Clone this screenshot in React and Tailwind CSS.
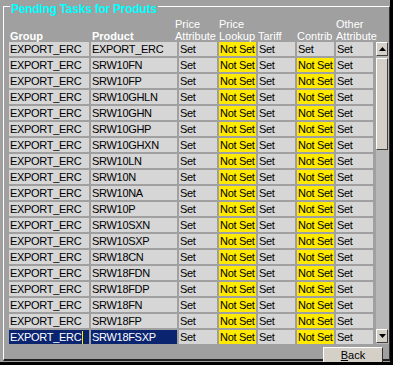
import React from "react";

const products = [
  "EXPORT_ERC",
  "SRW10FN",
  "SRW10FP",
  "SRW10GHLN",
  "SRW10GHN",
  "SRW10GHP",
  "SRW10GHXN",
  "SRW10LN",
  "SRW10N",
  "SRW10NA",
  "SRW10P",
  "SRW10SXN",
  "SRW10SXP",
  "SRW18CN",
  "SRW18FDN",
  "SRW18FDP",
  "SRW18FN",
  "SRW18FP",
  "SRW18FSXP",
];

const rows = products.map((p, i) => ({
  group: "EXPORT_ERC",
  product: p,
  priceAttr: "Set",
  priceLookup: "Not Set",
  tariff: "Set",
  contrib: i === 0 ? "Set" : "Not Set",
  other: "Set",
}));

const Cell = ({ value }) => (
  <div
    className={`h-[14px] pl-[1px] leading-[14px] tracking-[-0.3px] whitespace-nowrap overflow-hidden ${
      value === "Not Set" ? "bg-[#ffea00]" : "bg-[#d6d6d6]"
    } text-black`}
  >
    {value}
  </div>
);

const Arrow = ({ up }) => (
  <svg width="7" height="4" viewBox="0 0 7 4">
    {up ? <path d="M3.5 0 L7 4 L0 4 Z" fill="#000" /> : <path d="M0 0 L7 0 L3.5 4 Z" fill="#000" />}
  </svg>
);

const ScrollBar = () => (
  <div className="w-[13px] h-[302px] bg-[#b8b8b8] flex flex-col">
    <div className="h-[14px] w-[12px] bg-[#d4d0c8] border-t border-l border-white border-r border-b border-r-[#404040] border-b-[#404040] flex items-center justify-center">
      <Arrow up />
    </div>
    <div className="mt-[2px] h-[92px] w-[12px] bg-[#d4d0c8] border-t border-l border-white border-r border-b border-r-[#404040] border-b-[#404040]"></div>
    <div className="flex-1"></div>
    <div className="mb-[1px] h-[14px] w-[12px] bg-[#d4d0c8] border-t border-l border-white border-r border-b border-r-[#404040] border-b-[#404040] flex items-center justify-center">
      <Arrow />
    </div>
  </div>
);

const cols = "grid grid-cols-[80px_86px_38px_37px_37px_37px_37px] gap-x-[2px]";

export default function App() {
  return (
    <div
      className="relative w-[393px] h-[365px] bg-[#a0a0a0] border-r-[3px] border-b-[3px] border-black text-[11px] overflow-hidden"
      style={{ fontFamily: "'Liberation Sans', Arial, sans-serif" }}
    >
      {/* group box */}
      <div className="mt-[6px] ml-[3px] w-[387px] h-[355px] border-t border-l border-white border-r border-b-2 border-r-[#303030] border-b-[#202020] pl-[5px]">
        <div className="-mt-[4px] ml-[1px] w-fit px-[1px] bg-[#a0a0a0] text-[#00ffff] font-bold text-[12px] tracking-[-0.25px] leading-[13px]">
          Pending Tasks for Produts
        </div>

        {/* header */}
        <div className={`${cols} h-[26px] items-end text-white leading-[12px]`}>
          <div className="font-bold pl-[1px]">Group</div>
          <div className="font-bold pl-[1px]">Product</div>
          <div className="-ml-[4px] whitespace-nowrap">
            Price
            <br />
            Attribute
          </div>
          <div className="whitespace-nowrap">
            Price
            <br />
            Lookup
          </div>
          <div>Tariff</div>
          <div>Contrib</div>
          <div className="whitespace-nowrap">
            Other
            <br />
            Attribute
          </div>
        </div>

        {/* rows + scrollbar */}
        <div className="flex gap-[3px]">
          <div className={`${cols} gap-y-[2px]`}>
            {rows.map((r, i) => {
              const selected = i === rows.length - 1;
              return (
                <React.Fragment key={r.product}>
                  {selected ? (
                    <div className="h-[14px] pl-[1px] leading-[14px] tracking-[-0.3px] bg-[#0a2470] text-white flex items-center whitespace-nowrap">
                      {r.group}
                      <span className="ml-[1px] w-[1px] h-[13px] bg-[#ffee00]"></span>
                    </div>
                  ) : (
                    <Cell value={r.group} />
                  )}
                  {selected ? (
                    <div className="h-[14px] pl-[1px] leading-[14px] tracking-[-0.3px] bg-[#0a2470] text-white">
                      {r.product}
                    </div>
                  ) : (
                    <Cell value={r.product} />
                  )}
                  <Cell value={r.priceAttr} />
                  <Cell value={r.priceLookup} />
                  <Cell value={r.tariff} />
                  <Cell value={r.contrib} />
                  <Cell value={r.other} />
                </React.Fragment>
              );
            })}
          </div>
          <ScrollBar />
        </div>
      </div>

      {/* Back button sits over the group box edge */}
      <button className="absolute left-[323px] top-[347px] w-[60px] h-[16px] bg-[#d4d0c8] border-t border-l border-white border-r border-b border-r-[#303030] border-b-[#101010] text-black text-[11px] leading-[13px] flex items-center justify-center">
        <span>
          <span className="underline">B</span>ack
        </span>
      </button>
    </div>
  );
}
